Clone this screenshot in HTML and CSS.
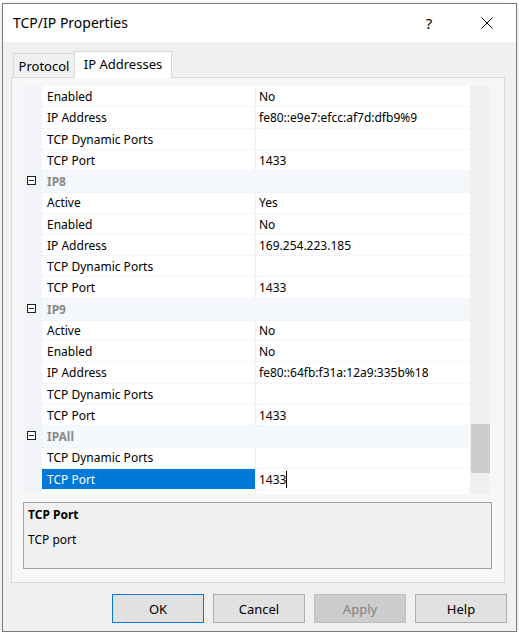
FILE: index.html
```html
<!DOCTYPE html>
<html>
<head>
<meta charset="utf-8">
<title>TCP/IP Properties</title>
<link rel="stylesheet" href="styles.css">
</head>
<body>
<div class="window">
  <div class="titlebar">
    <span class="title">TCP/IP Properties</span>
    <span class="tbtn help">?</span>
    <span class="tbtn close">
      <svg width="12" height="12" viewBox="0 0 12 12"><path d="M0.5 0.5 L11.5 11.5 M11.5 0.5 L0.5 11.5" stroke="#000" stroke-width="1" fill="none"/></svg>
    </span>
  </div>
  <div class="client">
    <div class="tabs">
      <div class="tab">Protocol</div>
      <div class="tab active">IP Addresses</div>
    </div>
    <div class="panel">
      <div class="gridwrap">
        <div class="grid">
          <div class="row"><div class="m"></div><div class="n">Enabled</div><div class="v">No</div></div>
          <div class="row"><div class="m"></div><div class="n">IP Address</div><div class="v">fe80::e9e7:efcc:af7d:dfb9%9</div></div>
          <div class="row"><div class="m"></div><div class="n">TCP Dynamic Ports</div><div class="v"></div></div>
          <div class="row"><div class="m"></div><div class="n">TCP Port</div><div class="v">1433</div></div>
          <div class="row cat"><div class="m"><span class="minus"></span></div><div class="c">IP8</div></div>
          <div class="row"><div class="m"></div><div class="n">Active</div><div class="v">Yes</div></div>
          <div class="row"><div class="m"></div><div class="n">Enabled</div><div class="v">No</div></div>
          <div class="row"><div class="m"></div><div class="n">IP Address</div><div class="v">169.254.223.185</div></div>
          <div class="row"><div class="m"></div><div class="n">TCP Dynamic Ports</div><div class="v"></div></div>
          <div class="row"><div class="m"></div><div class="n">TCP Port</div><div class="v">1433</div></div>
          <div class="row cat"><div class="m"><span class="minus"></span></div><div class="c">IP9</div></div>
          <div class="row"><div class="m"></div><div class="n">Active</div><div class="v">No</div></div>
          <div class="row"><div class="m"></div><div class="n">Enabled</div><div class="v">No</div></div>
          <div class="row"><div class="m"></div><div class="n">IP Address</div><div class="v">fe80::64fb:f31a:12a9:335b%18</div></div>
          <div class="row"><div class="m"></div><div class="n">TCP Dynamic Ports</div><div class="v"></div></div>
          <div class="row"><div class="m"></div><div class="n">TCP Port</div><div class="v">1433</div></div>
          <div class="row cat"><div class="m"><span class="minus"></span></div><div class="c">IPAll</div></div>
          <div class="row"><div class="m"></div><div class="n">TCP Dynamic Ports</div><div class="v"></div></div>
          <div class="row"><div class="m"></div><div class="n sel">TCP Port</div><div class="v"><span class="edit">1433</span></div></div>
          <div class="row"><div class="m"></div><div class="n empty"></div><div class="v empty"></div></div>
        </div>
        <div class="scrollbar"><div class="thumb" style="margin-top:338px;height:49px"></div></div>
      </div>
      <div class="desc">
        <div class="desc-title">TCP Port</div>
        <div class="desc-text">TCP port</div>
      </div>
    </div>
    <div class="buttons">
      <div class="btn default">OK</div>
      <div class="btn">Cancel</div>
      <div class="btn disabled">Apply</div>
      <div class="btn">Help</div>
    </div>
  </div>
</div>
</body>
</html>
```
FILE: styles.css
```css
html, body {
  margin: 0;
  padding: 0;
  background: #ffffff;
}
body {
  font-family: "Segoe UI", "Noto Sans", "Open Sans", sans-serif;
  font-size: 12px;
  color: #000;
}
.window {
  margin: 3px 0 0 2px;
  width: 513px;
  height: 627px;
  border: 1px solid #7a7a7a;
  display: flex;
  flex-direction: column;
  box-shadow: 0 2px 6px rgba(0,0,0,0.18);
  background: #f0f0f0;
}
.titlebar {
  height: 38px;
  background: #ffffff;
  display: flex;
  align-items: center;
  flex: none;
}
.title {
  flex: 1;
  padding-left: 10px;
  font-size: 14px;
  padding-bottom: 2px;
}
.tbtn {
  width: 58px;
  height: 38px;
  display: flex;
  align-items: center;
  justify-content: center;
}
.help {
  font-size: 15px;
  padding-bottom: 1px;
  box-sizing: border-box;
}
.close svg { display: block; }
.client {
  flex: 1;
  display: flex;
  flex-direction: column;
  padding: 9px 9px 8px 8px;
}
.tabs {
  height: 26px;
  display: flex;
  align-items: flex-end;
  flex: none;
}
.tab {
  box-sizing: border-box;
  border: 1px solid #d9d9d9;
  border-bottom: none;
  display: flex;
  align-items: center;
  justify-content: center;
  font-size: 13px;
}
.tab:first-child {
  margin-left: 2px;
  width: 62px;
  height: 24px;
  background: #f0f0f0;
  padding-top: 1px;
}
.tab.active {
  width: 98px;
  height: 27px;
  margin-bottom: -1px;
  margin-left: -1px;
  background: #ffffff;
  position: relative;
  z-index: 1;
  padding-bottom: 3px;
}
.panel {
  width: 494px;
  height: 506px;
  box-sizing: border-box;
  border: 1px solid #d9d9d9;
  background: #f7f7f7;
  padding: 8px 0 0 0;
  flex: none;
}
.gridwrap {
  display: flex;
  height: 408px;
  width: 466px;
  margin-left: 12px;
}
.grid {
  width: 446px;
  height: 408px;
  overflow: hidden;
  background: #ffffff;
}
.row {
  display: grid;
  grid-template-columns: 18px 214px 214px;
  height: 21.26px;
  line-height: 21px;
}
.m {
  background: #f1f4f9;
  position: relative;
}
.n {
  box-sizing: border-box;
  padding-left: 5px;
  border-right: 1px solid #f0f0f0;
  border-bottom: 1px dotted #ececec;
  white-space: nowrap;
  overflow: hidden;
}
.v {
  box-sizing: border-box;
  padding-left: 3px;
  border-bottom: 1px dotted #ececec;
  white-space: nowrap;
  overflow: hidden;
}
.n.empty, .v.empty { border-bottom: none; }
.n.sel {
  background: #0078d7;
  background-clip: padding-box;
  color: #ffffff;
}
.edit {
  border-right: 1px solid #000;
  padding-right: 0;
  display: inline-block;
  line-height: 17px;
}
.row.cat {
  grid-template-columns: 18px 428px;
  background: #f4f7fb;
}
.row.cat .m { background: #f1f4f9; }
.c {
  padding-left: 5px;
  font-weight: bold;
  color: #8a8a8a;
  border-bottom: 1px dotted #e6e9ee;
  box-sizing: border-box;
}
.minus {
  position: absolute;
  left: 3px;
  top: 5px;
  width: 9px;
  height: 9px;
  box-sizing: border-box;
  border: 1px solid #1e1e1e;
  background: #ffffff;
}
.minus::after {
  content: "";
  position: absolute;
  left: 1px;
  top: 3px;
  width: 5px;
  height: 1px;
  background: #1e1e1e;
}
.scrollbar {
  width: 20px;
  height: 408px;
  background: #f0f0f0;
}
.thumb {
  margin-left: 1px;
  width: 19px;
  background: #cdcdcd;
}
.desc {
  margin: 8px 0 0 11px;
  width: 469px;
  height: 67px;
  box-sizing: border-box;
  border: 1px solid #a0a0a0;
  background: #f0f0f0;
  padding: 2px 0 0 4px;
}
.desc-title {
  font-weight: bold;
  line-height: 20px;
}
.desc-text {
  margin-top: 5px;
  line-height: 20px;
}
.buttons {
  margin-top: 11px;
  display: flex;
  justify-content: flex-end;
  gap: 9px;
  flex: none;
}
.btn {
  width: 92px;
  height: 29px;
  box-sizing: border-box;
  border: 1px solid #adadad;
  background: #e1e1e1;
  display: flex;
  align-items: center;
  justify-content: center;
  font-size: 13px;
}
.btn.default {
  border-color: #0078d7;
}
.btn.disabled {
  background: #cccccc;
  border-color: #bfbfbf;
  color: #838383;
}
```
